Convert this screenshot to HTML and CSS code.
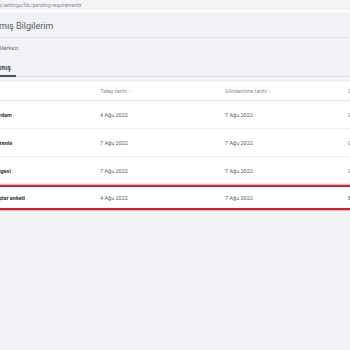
FILE: index.html
```html
<!DOCTYPE html>
<html lang="tr">
<head>
<meta charset="utf-8">
<link rel="stylesheet" href="styles.css">
</head>
<body>
<div class="urlbar">s/settings/fdc/pending-requirements</div>
<div class="header">
  <div class="title">mış Bilgilerim</div>
</div>
<div class="crumbs">
  <div class="crumb">Merkezi</div>
  <div class="tabs"><div class="tab">mış</div></div>
</div>
<div class="table">
  <div class="row head">
    <div class="c1"></div>
    <div class="c2">Talep tarihi <span class="sort">↕</span></div>
    <div class="c3">Gönderilme tarihi <span class="sort">↕</span></div>
    <div class="c4">D</div>
  </div>
  <div class="row">
    <div class="c1 name">rdam</div>
    <div class="c2">4 Ağu 2022</div>
    <div class="c3">7 Ağu 2022</div>
    <div class="c4">G</div>
  </div>
  <div class="row">
    <div class="c1 name">zenle</div>
    <div class="c2">7 Ağu 2022</div>
    <div class="c3">7 Ağu 2022</div>
    <div class="c4">G</div>
  </div>
  <div class="row">
    <div class="c1 name">igesi</div>
    <div class="c2">7 Ağu 2022</div>
    <div class="c3">7 Ağu 2022</div>
    <div class="c4">G</div>
  </div>
  <div class="row hl">
    <div class="c1 name">plar anketi</div>
    <div class="c2">4 Ağu 2022</div>
    <div class="c3">7 Ağu 2022</div>
    <div class="c4">E</div>
  </div>
</div>
</body>
</html>
```
FILE: styles.css
```css
html, body {
  margin: 0;
  padding: 0;
  background: #f1f2f5;
  font-family: Roboto, "Liberation Sans", sans-serif;
  width: 350px;
  height: 350px;
  overflow: hidden;
}
.urlbar {
  height: 10px;
  line-height: 10px;
  font-size: 5px;
  color: #8a8d93;
  background: #f3f4f6;
  margin-left: -1px;
  white-space: nowrap;
  border-bottom: 3px solid #fbfbfc;
}
.header {
  height: 24px;
  border-bottom: 1px solid #e0e2e6;
  display: flex;
  align-items: center;
}
.title {
  font-size: 9px;
  color: #555a61;
  margin-left: -1px;
  margin-top: 1px;
}
.crumbs {
  background: #f1f2f5;
}
.crumb {
  font-size: 5.5px;
  color: #70747a;
  height: 20px;
  line-height: 20px;
  margin-left: -1px;
}
.tabs {
  border-bottom: 1px solid #dcdee2;
  height: 18px;
  display: flex;
  align-items: flex-end;
}
.tab {
  font-size: 6.5px;
  font-weight: 700;
  color: #3f444b;
  width: 16px;
  height: 10px;
  line-height: 7px;
  border-bottom: 2px solid #4a5059;
  margin-bottom: -1px;
}
.table {
  margin-top: 5px;
  background: #ffffff;
  width: 350px;
}
.row {
  display: grid;
  grid-template-columns: 100px 125px 123px 2px;
  height: 28px;
  align-items: center;
  border-bottom: 1px solid #eceef1;
  font-size: 5.5px;
  color: #5b6068;
  box-sizing: border-box;
}
.row.head {
  height: 19px;
  color: #8a8e95;
  border-bottom: 1px solid #e3e5e9;
}
.sort {
  color: #b9bcc1;
  font-size: 5px;
}
.name {
  font-weight: 700;
  color: #2f343b;
  margin-left: -1px;
}
.c4 {
  overflow: hidden;
  white-space: nowrap;
}
.row.hl {
  height: 25px;
  border: 2px solid #d4202f;
  border-left: none;
  border-right: none;
  box-shadow: 0 0 1px 1px rgba(212, 32, 47, 0.25);
}
```
